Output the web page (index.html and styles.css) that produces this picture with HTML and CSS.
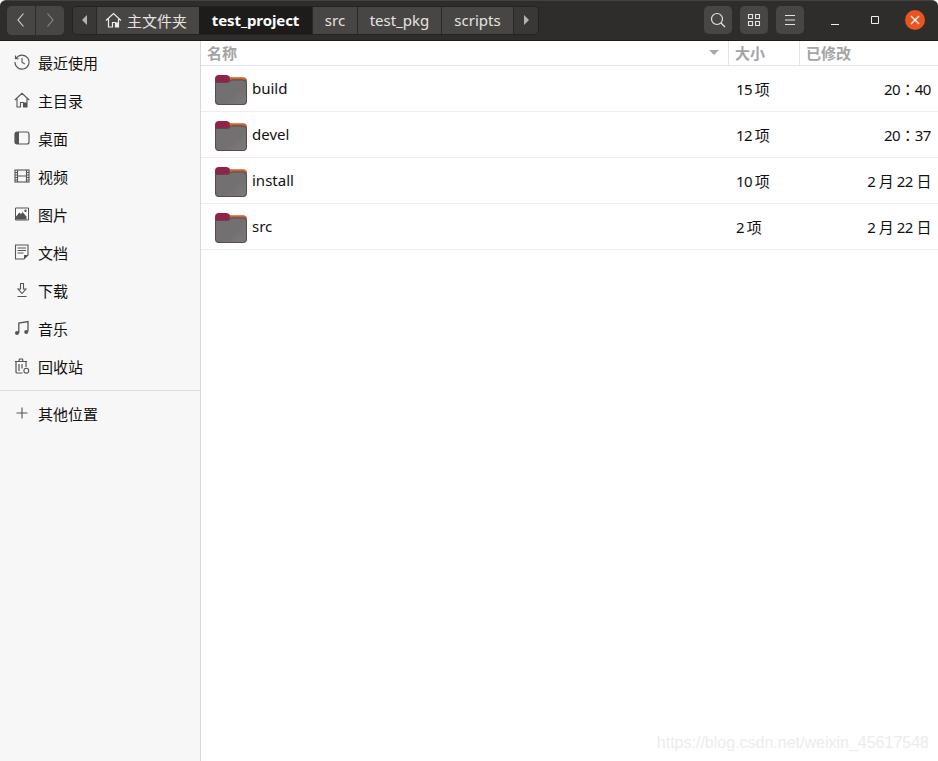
FILE: index.html
```html
<!DOCTYPE html>
<html lang="zh-CN">

<head>
    <meta charset="UTF-8">
    <meta name="viewport" content="width=device-width, initial-scale=1.0">
    <title>test_project</title>
    <link rel="stylesheet" href="styles.css">
</head>

<body>
    <!-- Header bar -->
    <header class="headerbar">
        <div class="nav-group">
            <button class="tool nav-btn"><svg width="16" height="16" viewBox="0 0 16 16"><path d="M10.500 1.500 5 8l5.500 6.500" fill="none" stroke="#d8d6d3" stroke-width="1.100"/></svg></button>
            <button class="tool nav-btn"><svg width="16" height="16" viewBox="0 0 16 16"><path d="M5.500 1.500 11 8l-5.500 6.500" fill="none" stroke="#8d8b88" stroke-width="1.100"/></svg></button>
        </div>
        <nav class="pathbar">
            <button class="crumb crumb-arrow crumb-first"><svg width="8" height="10" viewBox="0 0 8 10"><path d="M6 0v10L1 5z" fill="#b4b2af"/></svg></button>
            <button class="crumb crumb-home">
                <svg width="17" height="16" viewBox="0 0 17 16"><path d="M1 8.500 8.500 1.500 16 8.500M3.500 7v8H7.500V10.500h3V15h3V7" fill="none" stroke="#ecebe9" stroke-width="1.200"/><path d="M10.500 10.500h3V15h-3z" fill="#ecebe9"/></svg>
                主文件夹
            </button>
            <button class="crumb crumb-current">test_project</button>
            <button class="crumb crumb-src">src</button>
            <button class="crumb crumb-pkg">test_pkg</button>
            <button class="crumb crumb-scripts">scripts</button>
            <button class="crumb crumb-arrow crumb-last"><svg width="8" height="10" viewBox="0 0 8 10"><path d="M2 0v10l5-5z" fill="#b4b2af"/></svg></button>
        </nav>
        <div class="tools">
            <button class="tool"><svg width="16" height="16" viewBox="0 0 16 16"><circle cx="7" cy="7" r="5.500" fill="none" stroke="#e4e2df" stroke-width="1.200"/><path d="m11 11 4 4" stroke="#e4e2df" stroke-width="1.300"/></svg></button>
            <button class="tool"><svg width="14" height="14" viewBox="0 0 14 14"><path d="M1.500 1.500h4v4h-4zM8.500 1.500h4v4h-4zM1.500 8.500h4v4h-4zM8.500 8.500h4v4h-4z" fill="none" stroke="#e4e2df" stroke-width="1.100"/></svg></button>
            <button class="tool"><svg width="12" height="12" viewBox="0 0 12 12"><path d="M1 1.500h10M1 6h10M1 10.500h10" stroke="#e4e2df" stroke-width="1.100"/></svg></button>
        </div>
        <div class="win-controls">
            <span class="win-btn"><svg width="10" height="10" viewBox="0 0 10 10"><path d="M1 9.500h8" stroke="#f0efed" stroke-width="1"/></svg></span>
            <span class="win-btn"><svg width="10" height="10" viewBox="0 0 10 10"><path d="M1.500 1.500h7v7h-7z" fill="none" stroke="#f0efed" stroke-width="1"/></svg></span>
            <span class="win-btn win-close"><svg width="10" height="10" viewBox="0 0 10 10"><path d="m1 1 8 8M9 1l-8 8" stroke="#fff" stroke-width="1.200"/></svg></span>
        </div>
    </header>

    <div class="content">
        <!-- Sidebar -->
        <aside class="sidebar">
            <ul class="places">
                <li class="place"><svg width="16" height="16" viewBox="0 0 16 16"><path d="M2.200 4.200A7 7 0 1 1 1 8M1.500 1.500v3.200h3.200M8 4v4.300l2.800 1.700" fill="none" stroke="#555" stroke-width="1.100"/></svg>最近使用</li>
                <li class="place"><svg width="16" height="16" viewBox="0 0 16 16"><path d="M.8 8 8 1.300 15.200 8M3 6.500V15h3.500v-4.500h3V15H13V6.500" fill="none" stroke="#555" stroke-width="1.100"/><path d="M9.500 10.500H13V15H9.500z" fill="#555"/></svg>主目录</li>
                <li class="place"><svg width="16" height="16" viewBox="0 0 16 16"><rect x="1" y="2" width="14" height="12" rx="2" fill="none" stroke="#555" stroke-width="1.200"/><path d="M1 3.500A1.500 1.500 0 0 1 2.500 2H5v12H2.500A1.500 1.500 0 0 1 1 12.500z" fill="#555"/></svg>桌面</li>
                <li class="place"><svg width="16" height="16" viewBox="0 0 16 16"><rect x="1" y="2" width="14" height="12" fill="none" stroke="#555" stroke-width="1.100"/><path d="M3.500 2v12M12.500 2v12M3.500 8h9" fill="none" stroke="#555" stroke-width="1.100"/><path d="M1 4.500h2M1 7h2M1 9.500h2M1 12h2M13 4.500h2M13 7h2M13 9.500h2M13 12h2" stroke="#555"/></svg>视频</li>
                <li class="place"><svg width="16" height="16" viewBox="0 0 16 16"><path d="M1.500 2h13v12h-13z" fill="#fff" stroke="#555"/><path d="M2 10.500 5.500 6.500l1.500 1.700L8.500 6l4 4.500V13.500H2z" fill="#555"/><circle cx="11.500" cy="4.800" r="1.200" fill="#555"/></svg>图片</li>
                <li class="place"><svg width="16" height="16" viewBox="0 0 16 16"><path d="M1.500 1h12.500v10l-4 4H1.500z" fill="none" stroke="#555" stroke-width="1.100"/><path d="M3.500 4h8.500M3.500 6.500h8.500M3.500 9h6" stroke="#555"/><path d="M10 15v-4h4z" fill="#555"/></svg>文档</li>
                <li class="place"><svg width="16" height="16" viewBox="0 0 16 16"><path d="M6.500 1.500h3v5.500h2.500L8 11.500 4 7h2.500zM3.500 14.500h9" fill="none" stroke="#555" stroke-width="1.100"/></svg>下载</li>
                <li class="place"><svg width="16" height="16" viewBox="0 0 16 16"><path d="M4.800 13V3L14 1.500V11.500" fill="none" stroke="#555" stroke-width="1.300"/><circle cx="3" cy="13" r="2" fill="#555"/><circle cx="12.200" cy="12" r="2" fill="#555"/></svg>音乐</li>
                <li class="place"><svg width="16" height="16" viewBox="0 0 16 16"><path d="M1 3.500h12M5 3.500 5.500 1h3L9 3.500M2 3.500V14a1 1 0 0 0 1 1h5.500M12 3.500V9M5 6v7M8 6v4.500" fill="none" stroke="#555" stroke-width="1.200"/><circle cx="12.300" cy="12.700" r="2.400" fill="#fff" stroke="#555" stroke-width="1.100"/></svg>回收站</li>
            </ul>
            <div class="place place-other"><svg width="16" height="16" viewBox="0 0 16 16"><path d="M8 2.500v11M2.500 8h11" stroke="#555" stroke-width="1.100"/></svg>其他位置</div>
        </aside>

        <!-- File list -->
        <main class="files">
            <div class="list-head">
                <div class="col col-name">名称<svg class="sort-arrow" width="10" height="5" viewBox="0 0 10 5"><path d="M0 0h10L5 5z" fill="#a8a8a8"/></svg></div>
                <div class="col col-size">大小</div>
                <div class="col col-date">已修改</div>
            </div>
            <div class="row">
                <div class="name"><svg class="folder"><use href="#folder"/></svg>build</div>
                <div class="size">15 项</div>
                <div class="date time">20：40</div>
            </div>
            <div class="row">
                <div class="name"><svg class="folder"><use href="#folder"/></svg>devel</div>
                <div class="size">12 项</div>
                <div class="date time">20：37</div>
            </div>
            <div class="row">
                <div class="name"><svg class="folder"><use href="#folder"/></svg>install</div>
                <div class="size">10 项</div>
                <div class="date">2 月 22 日</div>
            </div>
            <div class="row">
                <div class="name"><svg class="folder"><use href="#folder"/></svg>src</div>
                <div class="size">2 项</div>
                <div class="date">2 月 22 日</div>
            </div>
        </main>
    </div>

    <div class="watermark">https://blog.csdn.net/weixin_45617548</div>

    <svg width="0" height="0" class="defs">
        <defs>
            <linearGradient id="folder-body" x1="0" y1="0" x2="1" y2="1">
                <stop offset="0.6" stop-color="#727070"/>
                <stop offset="1" stop-color="#7f7d7c"/>
            </linearGradient>
            <symbol id="folder" viewBox="0 0 32 30">
                <path d="M0 4a4 4 0 0 1 4-4h7.500a4 4 0 0 1 3 1.500L15.500 3H28a4 4 0 0 1 4 4v6H0z" fill="#8f2348"/>
                <path d="M14.500 2.200H28a4 4 0 0 1 4 4V9H16z" fill="#d0622a"/>
                <path d="M0 7h12c1.500 0 2-.5 3-1.500.7-.6 1.200-1 2.500-1H28a4 4 0 0 1 4 4V26a4 4 0 0 1-4 4H4a4 4 0 0 1-4-4z" fill="url(#folder-body)"/>
                <path d="M.5 7.500h11.500c1.700 0 2.300-.5 3.300-1.500.7-.6 1.200-1 2.200-1H28A3.500 3.500 0 0 1 31.500 8.500V26a3.500 3.500 0 0 1-3.500 3.500H4A3.500 3.500 0 0 1 .5 26z" fill="none" stroke="#5b4a49"/>
            </symbol>
        </defs>
    </svg>
</body>

</html>
```

FILE: styles.css
```css
* {
    box-sizing: border-box;
}

html,
body {
    height: 100%;
}

body {
    margin: 0;
    display: flex;
    flex-direction: column;
    overflow: hidden;
    background-color: #fff;
    color: #111;
    font-family: "Noto Sans", "Noto Sans CJK SC", sans-serif;
    font-size: 15px;
}

button {
    border: none;
    padding: 0;
    font: inherit;
    color: inherit;
}

.defs {
    position: absolute;
}

/* Header bar */
.headerbar {
    height: 41px;
    flex: none;
    display: flex;
    align-items: center;
    padding: 0 13px 1px 7px;
    background-color: #2f2d2c;
    border-top: 1px solid #444240;
    border-bottom: 1px solid #1d1c1b;
    border-radius: 6px 6px 0 0;
    color: #e6e4e1;
}

.nav-group {
    display: flex;
    width: 57px;
    height: 29px;
    border-radius: 5px;
    background-color: #484644;
    overflow: hidden;
}

.tool {
    width: 28px;
    height: 28px;
    display: flex;
    align-items: center;
    justify-content: center;
    border-radius: 5px;
    background-color: #484644;
}

.nav-btn {
    flex: 1;
    height: 29px;
    border-radius: 0;
}

.nav-btn + .nav-btn {
    border-left: 1px solid #2f2d2c;
}

.pathbar {
    width: 467px;
    height: 29px;
    margin-left: 8px;
    display: flex;
    border: 1px solid #242322;
    border-radius: 5px;
    overflow: hidden;
}

.crumb {
    height: 100%;
    flex: none;
    display: flex;
    align-items: center;
    justify-content: center;
    background-color: #484644;
    color: #e6e4e1;
    border-right: 1px solid #2a2928;
}

.crumb-arrow {
    width: 24px;
    background-color: #3a3836;
}

.crumb-last {
    flex: 1;
    border-right: none;
}

.crumb-home {
    width: 102px;
    justify-content: flex-start;
    gap: 5px;
    padding-left: 8px;
    border-right: none;
}

.crumb-current {
    width: 114px;
    background-color: #1e1c1b;
    color: #fff;
    font-weight: 700;
    letter-spacing: -0.100px;
}

.crumb-src {
    width: 45px;
}

.crumb-pkg {
    width: 84px;
}

.crumb-scripts {
    width: 72px;
}

.tools {
    margin-left: auto;
    display: flex;
    gap: 8px;
}

.win-controls {
    margin-left: 21px;
    display: flex;
    gap: 20px;
}

.win-btn {
    width: 20px;
    height: 20px;
    display: flex;
    align-items: center;
    justify-content: center;
    border-radius: 50%;
}

.win-close {
    background-color: #e95420;
}

/* Sidebar */
.content {
    flex: 1;
    display: flex;
    min-height: 0;
}

.sidebar {
    width: 201px;
    flex: none;
    padding-top: 2px;
    background-color: #f7f7f7;
    border-right: 1px solid #d9d9d9;
}

.places {
    margin: 0;
    padding: 0 0 5px;
    list-style: none;
    border-bottom: 1px solid #dcdcdc;
}

.place {
    height: 38px;
    display: flex;
    align-items: center;
    gap: 8px;
    padding-left: 14px;
}

.place-other {
    margin-top: 3px;
}

/* File list */
.files {
    flex: 1;
    min-width: 0;
}

.list-head {
    height: 25px;
    display: grid;
    grid-template-columns: 528px 71px 1fr;
    border-bottom: 1px solid #e4e4e4;
    color: #a4a4a4;
    font-weight: 700;
}

.col {
    display: flex;
    align-items: center;
    justify-content: space-between;
    padding: 0 6px 2px;
    border-right: 1px solid #e4e4e4;
}

.col-date {
    border-right: none;
}

.sort-arrow {
    margin-right: 3px;
}

.row {
    height: 46px;
    display: grid;
    grid-template-columns: 528px 71px 1fr;
    align-items: center;
    border-bottom: 1px solid #eeeeee;
}

.name {
    align-self: stretch;
    display: flex;
    align-items: center;
    gap: 5px;
    padding-left: 14px;
    padding-bottom: 2px;
}

.folder {
    width: 32px;
    height: 30px;
    flex: none;
    margin-top: 5px;
}

.size {
    padding-left: 7px;
    letter-spacing: -0.600px;
    word-spacing: -0.500px;
}

.date {
    padding-right: 7px;
    text-align: right;
    letter-spacing: -0.450px;
}

.time {
    font-family: "Noto Sans", "Noto Sans CJK TC", sans-serif;
}

.watermark {
    position: absolute;
    right: 9px;
    bottom: 9px;
    color: #ececec;
    font-family: "Liberation Sans", sans-serif;
    font-size: 16px;
}
```
